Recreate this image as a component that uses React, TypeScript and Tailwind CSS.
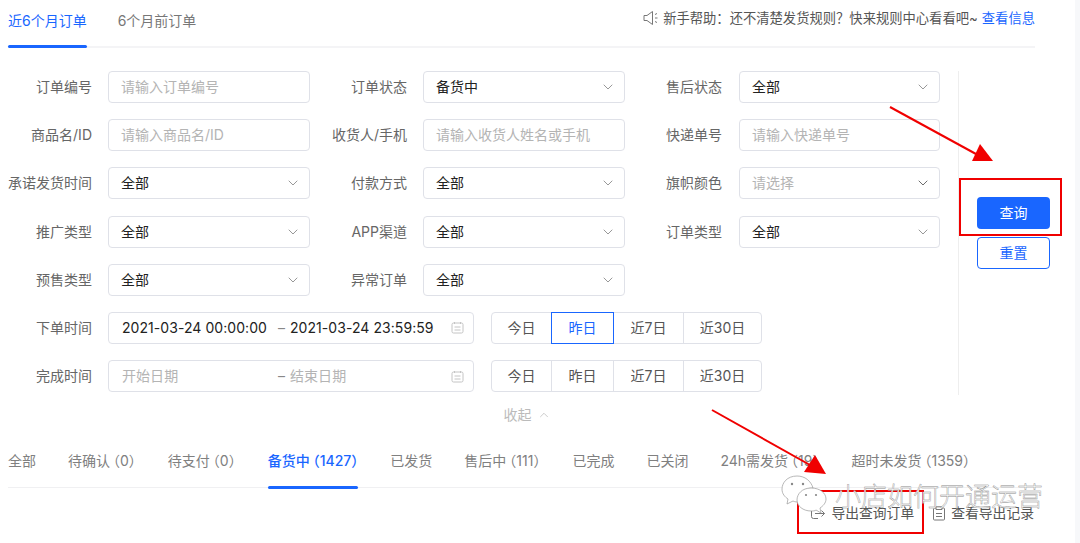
import { ChevronDown, ChevronUp } from "lucide-react";

const FONT = "font-['Inter','Noto_Sans_CJK_SC',sans-serif]";

const statusTabs = [
  { name: "全部" },
  { name: "待确认", count: "0" },
  { name: "待支付", count: "0" },
  { name: "备货中", count: "1427", active: true },
  { name: "已发货" },
  { name: "售后中", count: "111" },
  { name: "已完成" },
  { name: "已关闭" },
  { name: "24h需发货", count: "19" },
  { name: "超时未发货", count: "1359" },
];

function Field({ label, children, last }: { label: string; children: React.ReactNode; last?: boolean }) {
  return (
    <div className="flex h-8 items-center">
      <div className="w-[92px] shrink-0 text-right text-[#666]">{label}</div>
      <div className={last ? "ml-[17px] w-[201px]" : "ml-4 w-[202px]"}>{children}</div>
    </div>
  );
}

function TextBox({ placeholder }: { placeholder: string }) {
  return (
    <div className="flex h-8 items-center rounded-[4px] border border-[#dfe1e8] pl-3 text-[#b4b4b4]">
      {placeholder}
    </div>
  );
}

function Select({ value, placeholder, dark }: { value?: string; placeholder?: string; dark?: boolean }) {
  return (
    <div className="flex h-8 items-center justify-between rounded-[4px] border border-[#dfe1e8] pr-[8px] pl-3">
      <span className={value ? "text-[#222]" : "text-[#b4b4b4]"}>{value ?? placeholder}</span>
      <ChevronDown size={16} strokeWidth={1.3} className={dark ? "text-[#555]" : "text-[#888]"} />
    </div>
  );
}

function CalendarIcon() {
  return (
    <svg width="13" height="13" viewBox="0 0 13 13" fill="none" stroke="#c4c4c4" strokeWidth="1">
      <rect x="1" y="2" width="11" height="10" rx="1.5" />
      <path d="M3.5 1V3M9.5 1V3M3.5 6H9.5M3.5 9H9.5" />
    </svg>
  );
}

function DateRow({ label, start, end, filled, active }: { label: string; start: string; end: string; filled?: boolean; active?: string }) {
  const ranges = [
    { name: "今日", w: "w-[61px]" },
    { name: "昨日", w: "w-[63px]" },
    { name: "近7日", w: "w-[71px]" },
    { name: "近30日", w: "w-[79px]" },
  ];
  return (
    <div className="flex h-8 items-center">
      <div className="w-[92px] shrink-0 text-right text-[#666]">{label}</div>
      <div className={`ml-4 flex h-8 w-[366px] items-center rounded-[4px] border border-[#dfe1e8] pl-[13px] ${filled ? "text-[#222]" : "text-[#b4b4b4]"}`}>
        <span className="w-[156px] whitespace-nowrap tracking-[0.06px]">{start}</span>
        <span className="w-[12px] text-[#888]">–</span>
        <span className="w-[161px] whitespace-nowrap tracking-[0.06px]">{end}</span>
        <CalendarIcon />
      </div>
      <div className="ml-[17px] flex h-8">
        {ranges.map((r) => (
          <div
            key={r.name}
            className={`-ml-px flex items-center justify-center border first:ml-0 first:rounded-l-[4px] last:rounded-r-[4px] ${r.w} ${
              r.name === active ? "z-10 border-[#1966ff] text-[#1966ff]" : "border-[#dfe1e8] text-[#555]"
            }`}
          >
            {r.name}
          </div>
        ))}
      </div>
    </div>
  );
}

export default function App() {
  return (
    <div className={`relative flex h-[543px] w-[1080px] overflow-hidden bg-white text-sm ${FONT}`}>
      <div className="w-[1075px] shrink-0">
        {/* top tabs */}
        <div className="ml-2 flex h-[48px] w-[1027px] items-start justify-between border-b-2 border-[#f4f4f6]">
          <div className="flex gap-[31px]">
            <div className="relative h-[46px] pt-[11px] text-[#1966ff]">
              近6个月订单
              <div className="absolute right-0 bottom-[-2px] left-0 h-[3px] rounded-sm bg-[#1966ff]" />
            </div>
            <div className="pt-[11px] text-[#777]">6个月前订单</div>
          </div>
          <div className="flex items-center pt-[9px] text-[13.3px] text-[#555]">
            <svg width="16" height="16" viewBox="0 0 16 16" fill="none" stroke="#777" strokeWidth="1" className="mr-[4px]">
              <path d="M1 5.5V10.5H4L9.5 14.5V1.5L4 5.5H1Z" />
              <path d="M12 4.5L14 3.5M12 8H14.5M12 11.5L14 12.5" />
            </svg>
            新手帮助：还不清楚发货规则？快来规则中心看看吧~
            <span className="ml-1 text-[#1966ff]">查看信息</span>
          </div>
        </div>

        {/* filter form */}
        <div className="mt-[23px] flex">
          <div className="w-[950px]">
            <div className="flex flex-col gap-y-[16.2px]">
              <div className="grid grid-cols-[315px_315px_1fr]">
                <Field label="订单编号"><TextBox placeholder="请输入订单编号" /></Field>
                <Field label="订单状态"><Select value="备货中" /></Field>
                <Field last label="售后状态"><Select value="全部" /></Field>
              </div>
              <div className="grid grid-cols-[315px_315px_1fr]">
                <Field label="商品名/ID"><TextBox placeholder="请输入商品名/ID" /></Field>
                <Field label="收货人/手机"><TextBox placeholder="请输入收货人姓名或手机" /></Field>
                <Field last label="快递单号"><TextBox placeholder="请输入快递单号" /></Field>
              </div>
              <div className="grid grid-cols-[315px_315px_1fr]">
                <Field label="承诺发货时间"><Select value="全部" /></Field>
                <Field label="付款方式"><Select value="全部" /></Field>
                <Field last label="旗帜颜色"><Select placeholder="请选择" dark /></Field>
              </div>
              <div className="grid grid-cols-[315px_315px_1fr]">
                <Field label="推广类型"><Select value="全部" /></Field>
                <Field label="APP渠道"><Select value="全部" /></Field>
                <Field last label="订单类型"><Select value="全部" /></Field>
              </div>
              <div className="grid grid-cols-[315px_315px_1fr]">
                <Field label="预售类型"><Select value="全部" /></Field>
                <Field label="异常订单"><Select value="全部" /></Field>
              </div>
              <DateRow label="下单时间" start="2021-03-24 00:00:00" end="2021-03-24 23:59:59" filled active="昨日" />
              <DateRow label="完成时间" start="开始日期" end="结束日期" />
            </div>
          </div>
          <div className="ml-2 h-[324px] border-l border-[#eeeeee] pt-[126px] pl-[18px]">
            <div className="flex h-8 w-[73px] items-center justify-center rounded-[4px] bg-[#1966ff] text-white">查询</div>
            <div className="mt-2 flex h-8 w-[73px] items-center justify-center rounded-[4px] border border-[#1966ff] text-[#1966ff]">重置</div>
          </div>
        </div>

        {/* collapse */}
        <div className="mt-[10px] flex h-5 items-center justify-center pr-[21px] text-[#bbb]">
          收起
          <ChevronUp size={14} strokeWidth={1.3} className="ml-[5px]" />
        </div>

        {/* status tabs */}
        <div className="mt-[20px] ml-2 flex h-[43px] w-[1027px] gap-8 border-b border-[#f0f0f2] text-[#808080]">
          {statusTabs.map((t) => (
            <div
              key={t.name}
              className={`relative h-[43px] whitespace-nowrap pt-[6px] ${t.active ? "font-medium text-[#1966ff]" : ""}`}
            >
              {t.name}
              {t.count && <span className="ml-[3px] [font-feature-settings:'halt']">（{t.count}）</span>}
              {t.active && <div className="absolute right-0 bottom-[-1px] left-0 h-[3px] rounded-sm bg-[#1966ff]" />}
            </div>
          ))}
        </div>

        {/* export actions */}
        <div className="mt-4 mr-[41px] flex justify-end text-[13.8px] text-[#555]">
          <div className="flex items-center">
            <svg width="16" height="15" viewBox="0 0 16 15" fill="none" stroke="#777" strokeWidth="1" className="mr-[5px]">
              <path d="M8 2.5H3.5A2 2 0 0 0 1.5 4.5V10.5A2 2 0 0 0 3.5 12.5H8" />
              <path d="M5 7.5H14.5M11.5 4.5L14.5 7.5L11.5 10.5" />
            </svg>
            导出查询订单
          </div>
          <div className="ml-[18px] flex items-center">
            <svg width="14" height="15" viewBox="0 0 14 15" fill="none" stroke="#777" strokeWidth="1" className="mr-[5px]">
              <path d="M4 2H2.5A1 1 0 0 0 1.5 3V13A1 1 0 0 0 2.5 14H11.5A1 1 0 0 0 12.5 13V3A1 1 0 0 0 11.5 2H10M4 .8H10V3.5H4V.8ZM4 7.5H10M4 10.5H10" />
            </svg>
            查看导出记录
          </div>
        </div>
      </div>
      <div className="flex-1 bg-[#f7f8fa]" />

      {/* annotations drawn over the screenshot */}
      <div className="absolute top-[178px] left-[959px] h-[58px] w-[103px] border-2 border-[#f00000]" />
      <div className="absolute top-[490px] left-[797px] h-[44px] w-[127px] border-2 border-[#f00000]" />
      <svg className="absolute inset-0" width="1080" height="543" viewBox="0 0 1080 543" fill="none">
        <path d="M890 107L976 154" stroke="#f00000" strokeWidth="2" />
        <path d="M972 161L980 144L993 161Z" fill="#f00000" />
        <path d="M712 410L810 465" stroke="#f00000" strokeWidth="2" />
        <path d="M804 472L815 455L826 474Z" fill="#f00000" />
        {/* wechat logo */}
        <path d="M797 476C787 476 782 483 782 489C782 494 785 497 788 499L787 504L793 501C795 502 797 502 798 502C798 494 804 488 813 488C811 481 805 476 797 476Z" fill="#fff" stroke="#999" strokeWidth="0.7" />
        <path d="M811 488C802 488 797 494 797 500C797 506 803 511 811 511C813 511 815 511 816 510L821 513L820 508C823 506 826 503 826 499C826 493 820 488 811 488Z" fill="#fff" stroke="#999" strokeWidth="0.7" />
        <circle cx="792" cy="484" r="1.2" fill="#888" />
        <circle cx="803" cy="484" r="1.2" fill="#888" />
        <circle cx="806" cy="495" r="1.1" fill="#888" />
        <circle cx="816" cy="495" r="1.1" fill="#888" />
      </svg>
      <div className="absolute top-[477px] left-[835px] whitespace-nowrap font-['Noto_Sans_CJK_SC',sans-serif] text-[26px] leading-[36px] font-light text-white [-webkit-text-stroke:0.4px_#8a8a8a]">
        小店如何开通运营
      </div>
    </div>
  );
}
